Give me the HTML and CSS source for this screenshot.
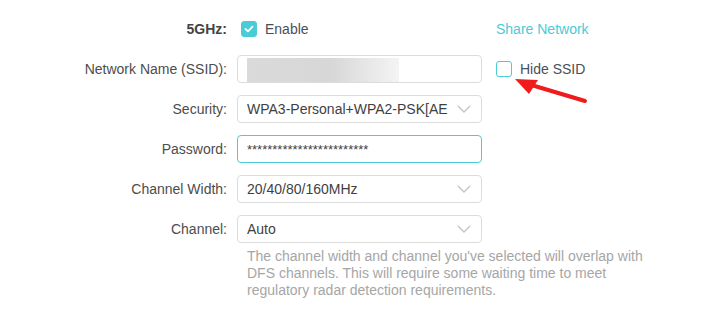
FILE: index.html
```html
<!DOCTYPE html>
<html>
<head>
<meta charset="utf-8">
<link rel="stylesheet" href="styles.css">
</head>
<body>
<div class="form">
  <div class="row">
    <div class="label bold">5GHz:</div>
    <div class="control">
      <label class="check"><span class="box checked"><svg width="10" height="8" viewBox="0 0 10 8"><polyline points="1.5,4 4,6.3 8.5,1.7" fill="none" stroke="#fff" stroke-width="1.8" stroke-linecap="round" stroke-linejoin="round"/></svg></span><span class="check-text">Enable</span></label>
    </div>
    <div class="extra"><a class="link">Share Network</a></div>
  </div>
  <div class="row">
    <div class="label">Network Name (SSID):</div>
    <div class="control"><div class="input"><span class="blur"></span></div></div>
    <div class="extra"><label class="check"><span class="box"></span><span class="check-text">Hide SSID</span></label></div>
  </div>
  <div class="row">
    <div class="label">Security:</div>
    <div class="control"><div class="input select"><span class="value">WPA3-Personal+WPA2-PSK[AE</span><svg class="chev" width="14" height="8" viewBox="0 0 14 8"><polyline points="1,1 7,7 13,1" fill="none" stroke="#c4c4c4" stroke-width="1.4"/></svg></div></div>
  </div>
  <div class="row">
    <div class="label">Password:</div>
    <div class="control"><div class="input focus"><span class="value pw">************************</span></div></div>
  </div>
  <div class="row">
    <div class="label">Channel Width:</div>
    <div class="control"><div class="input select"><span class="value">20/40/80/160MHz</span><svg class="chev" width="14" height="8" viewBox="0 0 14 8"><polyline points="1,1 7,7 13,1" fill="none" stroke="#c4c4c4" stroke-width="1.4"/></svg></div></div>
  </div>
  <div class="row">
    <div class="label">Channel:</div>
    <div class="control"><div class="input select"><span class="value">Auto</span><svg class="chev" width="14" height="8" viewBox="0 0 14 8"><polyline points="1,1 7,7 13,1" fill="none" stroke="#c4c4c4" stroke-width="1.4"/></svg></div></div>
  </div>
  <div class="hint">The channel width and channel you've selected will overlap with<br>DFS channels. This will require some waiting time to meet<br>regulatory radar detection requirements.</div>
</div>
<svg class="arrow" width="727" height="309" viewBox="0 0 727 309">
  <line x1="585" y1="101" x2="528" y2="84" stroke="#ee1c1c" stroke-width="4" stroke-linecap="round"/>
  <polygon points="515,79 538,80 529,94" fill="#ee1c1c"/>
</svg>
</body>
</html>
```
FILE: styles.css
```css
html, body {
  margin: 0;
  padding: 0;
  background: #fff;
}
body {
  font-family: "Liberation Sans", Arial, sans-serif;
  font-size: 14px;
  color: #4a4a4a;
  width: 727px;
  height: 309px;
  overflow: hidden;
  position: relative;
}
.form {
  padding-top: 15px;
  display: flex;
  flex-direction: column;
  gap: 12px;
}
.row {
  display: grid;
  grid-template-columns: 227px 245px auto;
  column-gap: 10px;
  height: 28px;
  align-items: center;
}
.label {
  text-align: right;
  color: #4d4d4d;
}
.bold {
  font-weight: bold;
  color: #444;
}
.extra {
  padding-left: 4px;
}
.link {
  color: #4acbd6;
}
.check {
  display: flex;
  align-items: center;
  gap: 8px;
}
.control > .check {
  padding-left: 4px;
}
.box {
  width: 16px;
  height: 16px;
  box-sizing: border-box;
  border: 1.5px solid #4acbd6;
  border-radius: 3px;
  display: flex;
  align-items: center;
  justify-content: center;
  background: #fff;
}
.box.checked {
  background: #4acbd6;
  border-color: #4acbd6;
}
.check-text {
  color: #4a5058;
}
.input {
  box-sizing: border-box;
  height: 28px;
  border: 1px solid #dcdcdc;
  border-radius: 4px;
  display: flex;
  align-items: center;
  padding: 0 10px 0 9px;
  position: relative;
  overflow: hidden;
}
.input.focus {
  border-color: #4acbd6;
}
.value {
  color: #3f3f3f;
  flex: 1;
  white-space: nowrap;
  overflow: hidden;
}
.pw {
  font-size: 13px;
}
.chev {
  flex: none;
  margin-left: 6px;
}
.blur {
  display: block;
  width: 152px;
  height: 25px;
  margin-top: 2px;
  align-self: flex-start;
  background: linear-gradient(90deg, #dadada 0%, #d7d7d7 55%, #e4e4e4 75%, #f4f4f4 100%);
}
.hint {
  margin-left: 247px;
  margin-top: -7px;
  line-height: 17px;
  color: #a6a6a6;
}
.arrow {
  position: absolute;
  left: 0;
  top: 0;
  pointer-events: none;
}
```
